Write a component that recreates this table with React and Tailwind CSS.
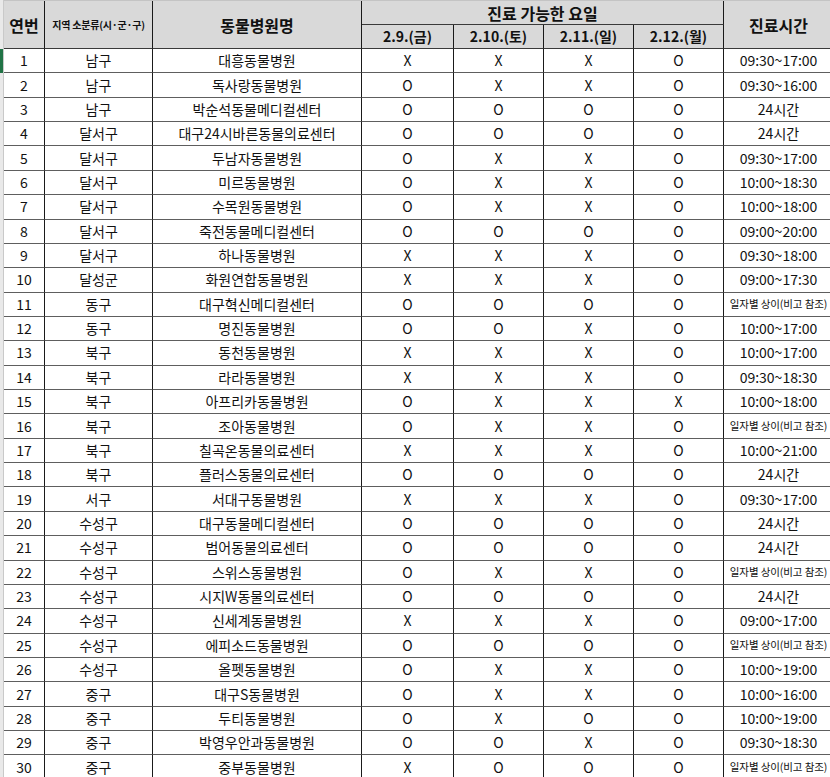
import React from "react";

const rows = [
  [1, "남구", "대흥동물병원", "X", "X", "X", "O", "09:30~17:00"],
  [2, "남구", "독사랑동물병원", "O", "X", "X", "O", "09:30~16:00"],
  [3, "남구", "박순석동물메디컬센터", "O", "O", "O", "O", "24시간"],
  [4, "달서구", "대구24시바른동물의료센터", "O", "O", "O", "O", "24시간"],
  [5, "달서구", "두남자동물병원", "O", "X", "X", "O", "09:30~17:00"],
  [6, "달서구", "미르동물병원", "O", "X", "X", "O", "10:00~18:30"],
  [7, "달서구", "수목원동물병원", "O", "X", "X", "O", "10:00~18:00"],
  [8, "달서구", "죽전동물메디컬센터", "O", "O", "O", "O", "09:00~20:00"],
  [9, "달서구", "하나동물병원", "X", "X", "X", "O", "09:30~18:00"],
  [10, "달성군", "화원연합동물병원", "X", "X", "X", "O", "09:00~17:30"],
  [11, "동구", "대구혁신메디컬센터", "O", "O", "O", "O", "note"],
  [12, "동구", "명진동물병원", "O", "O", "X", "O", "10:00~17:00"],
  [13, "북구", "동천동물병원", "X", "X", "X", "O", "10:00~17:00"],
  [14, "북구", "라라동물병원", "X", "X", "X", "O", "09:30~18:30"],
  [15, "북구", "아프리카동물병원", "O", "X", "X", "X", "10:00~18:00"],
  [16, "북구", "조아동물병원", "O", "X", "X", "O", "note"],
  [17, "북구", "칠곡온동물의료센터", "X", "X", "X", "O", "10:00~21:00"],
  [18, "북구", "플러스동물의료센터", "O", "O", "O", "O", "24시간"],
  [19, "서구", "서대구동물병원", "X", "X", "X", "O", "09:30~17:00"],
  [20, "수성구", "대구동물메디컬센터", "O", "O", "O", "O", "24시간"],
  [21, "수성구", "범어동물의료센터", "O", "O", "O", "O", "24시간"],
  [22, "수성구", "스위스동물병원", "O", "X", "X", "O", "note"],
  [23, "수성구", "시지W동물의료센터", "O", "O", "O", "O", "24시간"],
  [24, "수성구", "신세계동물병원", "X", "X", "X", "O", "09:00~17:00"],
  [25, "수성구", "에피소드동물병원", "O", "O", "O", "O", "note"],
  [26, "수성구", "올펫동물병원", "O", "X", "X", "O", "10:00~19:00"],
  [27, "중구", "대구S동물병원", "O", "X", "X", "O", "10:00~16:00"],
  [28, "중구", "두티동물병원", "O", "X", "O", "O", "10:00~19:00"],
  [29, "중구", "박영우안과동물병원", "O", "O", "X", "O", "09:30~18:30"],
  [30, "중구", "중부동물병원", "X", "O", "O", "O", "note"],
];

const cell =
  "flex items-center justify-center overflow-hidden whitespace-nowrap border-r border-b border-r-[#1a1a1a] border-b-[#5e5e5e]";
const hcell =
  "flex items-center justify-center overflow-hidden whitespace-nowrap border-r border-b border-r-[#1a1a1a] border-b-[#3a3a3a] font-bold";

export default function App() {
  return (
    <div className="w-[830px] h-[777px] overflow-hidden bg-white flex font-['Noto_Sans_CJK_KR',sans-serif] text-[#111]">
      <div className="w-[4px] shrink-0 flex flex-col bg-[#e9e9e9] border-r border-[#c9c9c9]">
        <div className="h-[49px]" />
        <div className="h-[24px] bg-[#217346]" />
        <div className="flex-1" />
      </div>
      <div className="flex flex-col w-[840px] shrink-0">
        <div className="grid grid-cols-[41px_108px_209px_92px_90px_90px_90px_110px] grid-rows-[24px_24px] bg-[#d9d9d9] border-t border-[#c4c4c4]">
          <div className={`${hcell} row-span-2 text-[16px]`}>연번</div>
          <div className={`${hcell} row-span-2 text-[10px] tracking-[-0.2px]`}>지역 소분류(시·군·구)</div>
          <div className={`${hcell} row-span-2 text-[16px]`}>동물병원명</div>
          <div className={`${hcell} col-span-4 text-[16px]`}>진료 가능한 요일</div>
          <div className={`${hcell} row-span-2 text-[16px]`}>진료시간</div>
          <div className={`${hcell} text-[14px]`}>2.9.(금)</div>
          <div className={`${hcell} text-[14px]`}>2.10.(토)</div>
          <div className={`${hcell} text-[14px]`}>2.11.(일)</div>
          <div className={`${hcell} text-[14px]`}>2.12.(월)</div>
        </div>
        <div className="grid grid-cols-[41px_108px_209px_92px_90px_90px_90px_110px] auto-rows-[24.37px] text-[14px]">
          {rows.map((r) => (
            <React.Fragment key={r[0]}>
              <div className={cell}>{r[0]}</div>
              <div className={cell}>{r[1]}</div>
              <div className={cell}>{r[2]}</div>
              <div className={cell}>{r[3]}</div>
              <div className={cell}>{r[4]}</div>
              <div className={cell}>{r[5]}</div>
              <div className={cell}>{r[6]}</div>
              <div className={cell}>
                {r[7] === "note" ? (
                  <span className="text-[10.5px] tracking-[-0.1px]">일자별 상이(비고 참조)</span>
                ) : (
                  r[7]
                )}
              </div>
            </React.Fragment>
          ))}
        </div>
      </div>
    </div>
  );
}
